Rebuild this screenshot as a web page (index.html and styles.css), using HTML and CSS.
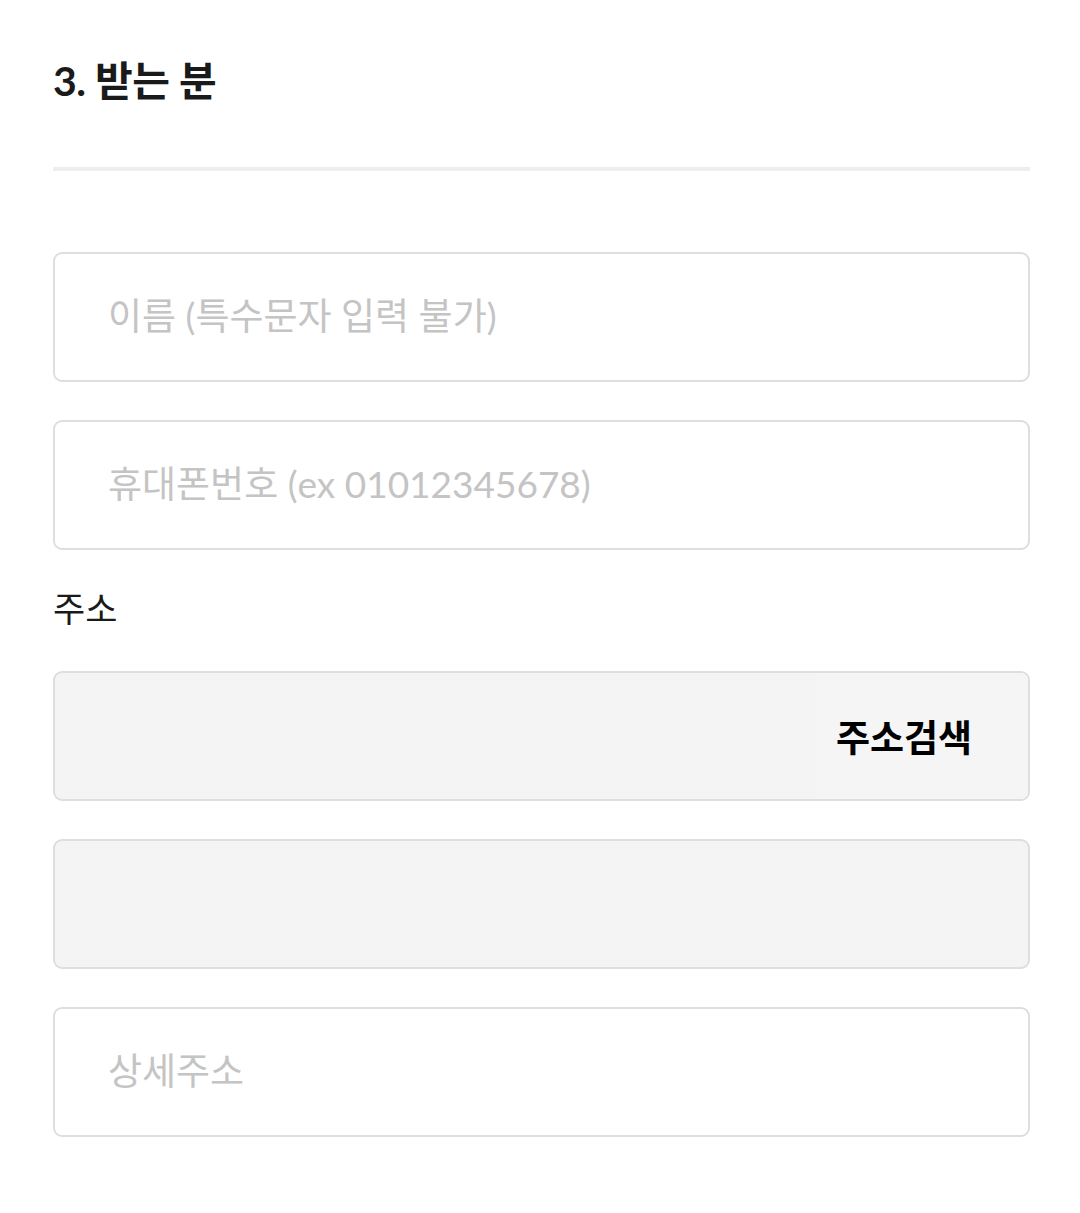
FILE: index.html
```html
<!DOCTYPE html>
<html lang="ko">
<head>
  <meta charset="UTF-8" />
  <meta name="viewport" content="width=device-width, initial-scale=1.0"/>
  <title>받는 분</title>
  <link rel="stylesheet" href="styles.css">
</head>
<body>
  <div class="secao">
    <h2 class="titulo">3. 받는 분</h2>
    <div class="divisor"></div>

    <div class="campos">
      <input class="campo" type="text" placeholder="이름 (특수문자 입력 불가)">
      <input class="campo" type="text" placeholder="휴대폰번호 (ex 01012345678)">

      <label class="rotulo">주소</label>
      <div class="campo campo-bloqueado linha-endereco">
        <input class="campo-interno" type="text" readonly>
        <button class="botao-busca">주소검색</button>
      </div>
      <input class="campo campo-bloqueado" type="text" readonly>
      <input class="campo" type="text" placeholder="상세주소">
    </div>
  </div>
</body>
</html>
```

FILE: styles.css
```css
body {
  margin: 0;
  background: white;
  font-family: Lato, "Noto Sans CJK KR", sans-serif;
  color: #1a1a1a;
}

.secao {
  margin: 0 50px 0 53px;
  padding-top: 51px;
}

.titulo {
  margin: 0;
  font-size: 41px;
  line-height: 60px;
  font-weight: 700;
  letter-spacing: -0.5px;
}

.divisor {
  margin-top: 56px;
  height: 4px;
  background: #eeeeee;
}

.campos {
  display: flex;
  flex-direction: column;
  gap: 38px;
  padding-top: 81px;
}

.campo {
  box-sizing: border-box;
  width: 100%;
  height: 130px;
  margin: 0;
  padding: 0 53px 3px;
  border: 2px solid #dedede;
  border-radius: 9px;
  background: white;
  font-family: inherit;
  font-size: 37px;
  color: #1a1a1a;
  outline: none;
}

.campo::placeholder {
  color: #c4c4c4;
}

.campo-bloqueado {
  background: #f4f4f4;
}

.rotulo {
  font-size: 35px;
  line-height: 40px;
  margin: 0 0 5px;
}

.linha-endereco {
  display: flex;
  padding: 0;
  overflow: hidden;
}

.campo-interno {
  flex: 1;
  min-width: 0;
  border: none;
  background: transparent;
  outline: none;
}

.botao-busca {
  width: 212px;
  padding: 0 36px 0 0;
  border: none;
  background: #f5f5f5;
  font-family: inherit;
  font-size: 37px;
  font-weight: 700;
  color: #000;
  cursor: pointer;
}
```
